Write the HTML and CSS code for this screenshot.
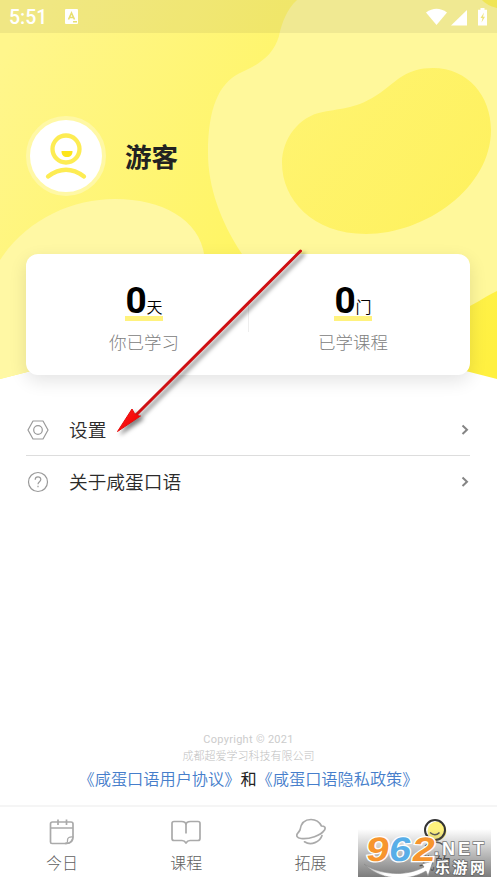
FILE: index.html
```html
<!DOCTYPE html>
<html lang="zh-CN">
<head>
<meta charset="utf-8">
<meta name="viewport" content="width=device-width">
<title>我的</title>
<link rel="stylesheet" href="styles.css">
</head>
<body>
<div class="app">
  <header class="hero">
    <svg class="hero-bg" viewBox="0 0 497 390" aria-hidden="true">
      <defs>
        <linearGradient id="base" x1="0" y1="60" x2="497" y2="360" gradientUnits="userSpaceOnUse">
          <stop offset="0" stop-color="#fff68c"/><stop offset=".5" stop-color="#fff566"/><stop offset="1" stop-color="#fff040"/>
        </linearGradient>
        <linearGradient id="bean" x1="282" y1="68" x2="491" y2="234" gradientUnits="userSpaceOnUse">
          <stop offset="0" stop-color="#fff472"/><stop offset="1" stop-color="#fef15c"/>
        </linearGradient>
      </defs>
      <path fill="url(#base)" d="M0 0H497V379Q372 345 248 345Q124 345 0 379Z"/>
      <path fill="#fff89b" d="M297 0H482Q486 5 497 8V291C483 298 475 304 462 310C410 336 300 330 242 254C220 221 208 186 208 153C208 108 219 83 240 73C257 65 273 57 279 36C282 22 287 9 297 0Z"/>
      <path fill="#fff8a4" d="M0 260C27 219 72 199 115 199C165 199 205 222 205 264C205 320 160 350 130 354Q60 362 0 379Z"/>
      <path fill="url(#bean)" d="M433 68C468 68 491 96 491 130C491 188 425 234 366 234C312 234 282 199 282 163C282 139 299 116 323 112C342 108 357 109 380 93C397 81 406 68 433 68Z"/>
    </svg>
    <div class="status">
      <span class="time">5:51</span>
      <svg class="app-badge" viewBox="0 0 13 15"><rect width="13" height="15" rx="1" fill="#fff"/><path d="M3.500 10.500L6.500 4L9.500 10.500M4.700 8.500H8.300M8 12.700H12" fill="none" stroke="#e8df70" stroke-width="1.600"/></svg>
      <svg class="signals" viewBox="0 0 62 18"><g fill="#fff"><path d="M0 4.500Q10.500 -3 21 4.500L10.500 17Z"/><path d="M41 2V17.500H25Z"/><path d="M54.500 0H58.500V1.800H61V17.500H52V1.800H54.500Z"/></g><path d="M58 4.500L54.500 10H56.500L55.500 14.500L59 8.800H57Z" fill="#eee37c"/></svg>
    </div>
    <div class="profile">
      <div class="avatar">
        <svg viewBox="0 0 72 72"><g fill="none" stroke="#fdec53" stroke-width="4.300" stroke-linecap="round"><circle cx="36" cy="29" r="13.500"/><path d="M18 56.500Q36 43 54 56.500"/></g><path d="M31.500 31H42.500C42.500 35 40.500 37 37 37S31.500 35 31.500 31Z" fill="#fde51a"/></svg>
      </div>
      <h1 class="name">游客</h1>
    </div>
    <section class="stats">
      <div class="stat"><div class="value"><b>0</b><span>天</span></div><div class="caption">你已学习</div></div>
      <div class="divider"></div>
      <div class="stat"><div class="value"><b>0</b><span>门</span></div><div class="caption">已学课程</div></div>
    </section>
  </header>

  <main class="menu">
    <div class="row">
      <svg class="row-icon" viewBox="0 0 22 22"><g fill="none" stroke="#999" stroke-width="1.200"><path d="M6 2H16L21 11L16 20H6L1 11Z" stroke-linejoin="round"/><circle cx="11" cy="11" r="4.300"/></g></svg>
      <span class="row-text">设置</span>
      <svg class="chevron" viewBox="0 0 8 12"><path d="M1.500 1.500L6 5.700L1.500 10" fill="none" stroke="#858585" stroke-width="2"/></svg>
    </div>
    <div class="row">
      <svg class="row-icon" viewBox="0 0 22 22"><g fill="none" stroke="#999" stroke-width="1.200"><circle cx="11" cy="11" r="9.500"/><path d="M8.200 8.700C8.200 5 13.800 5 13.800 8.600C13.800 10.800 11 10.600 11 13.300M11 14.800V16.200"/></g></svg>
      <span class="row-text">关于咸蛋口语</span>
      <svg class="chevron" viewBox="0 0 8 12"><path d="M1.500 1.500L6 5.700L1.500 10" fill="none" stroke="#858585" stroke-width="2"/></svg>
    </div>
  </main>

  <footer class="legal">
    <div class="copyright">Copyright © 2021</div>
    <div class="company">成都超爱学习科技有限公司</div>
    <div class="links"><a>《咸蛋口语用户协议》</a>和<a>《咸蛋口语隐私政策》</a></div>
  </footer>

  <nav class="tabs">
    <div class="tab">
      <svg viewBox="0 0 30 28"><g fill="none" stroke="#aaa" stroke-width="1.700"><path d="M19.500 25.500H5Q3.500 25.500 3.500 24V6Q3.500 4 5.500 4H24Q26 4 26 6V18.500Q26 25.500 19.500 25.500ZM3.500 10H26M11 1.500V7M19.500 1.500V7"/><path d="M26 19C22.500 18.500 20.500 20 20.500 22C20.500 24 21 24.500 18 25.500C22 26 26 23 26 19Z" stroke-width="1.300"/></g></svg>
      <span>今日</span>
    </div>
    <div class="tab">
      <svg viewBox="0 0 30 28"><path d="M15 15.500V7Q15 3.500 10.500 3.500H3Q1 3.500 1 5.500V20.500Q1 22.500 3 22.500H11Q13.500 22.500 15 25Q16.500 22.500 19 22.500H27Q29 22.500 29 20.500V5.500Q29 3.500 27 3.500H19.500Q15 3.500 15 7" fill="none" stroke="#aaa" stroke-width="1.700" stroke-linejoin="round"/></svg>
      <span>课程</span>
    </div>
    <div class="tab">
      <svg viewBox="0 0 30 28"><g fill="none" stroke="#aaa" stroke-width="1.700" stroke-linecap="round"><path d="M4 12C5 5 9 1.500 15 1.500C20 1.500 23.500 4 25.500 8C28.500 8 30 9.500 28.500 12C25 17.500 13 21.500 5 20.500C.8 20 0 17.500 1.500 15.500Q2.800 14 4 12Z"/><path d="M8.500 23.800C15 28 24 24 26 17.500"/></g></svg>
      <span>拓展</span>
    </div>
    <div class="tab active">
      <svg viewBox="0 0 30 28"><circle cx="17" cy="13" r="9.500" fill="#fff27d"/><circle cx="15" cy="12" r="10" fill="none" stroke="#333" stroke-width="2"/><path d="M10 14.500Q15 19 19.500 14.500M5 28Q15 20 25 28" fill="none" stroke="#555" stroke-width="1.500"/></svg>
      <span>我的</span>
    </div>
  </nav>

  <svg class="arrow" viewBox="0 0 200 200" aria-hidden="true">
    <defs>
      <linearGradient id="head" x1="0" y1="0" x2="1" y2="1"><stop offset="0" stop-color="#f22"/><stop offset=".6" stop-color="#f50808"/><stop offset="1" stop-color="#b80000"/></linearGradient>
    </defs>
    <path d="M192.500 11L28 175" stroke="#cf1013" stroke-width="3" stroke-linecap="round"/>
    <path d="M9.500 191.500L24 169L26.500 173.500L31 176H32.500Z" fill="url(#head)" stroke="#e60b0b"/>
  </svg>

  <div class="watermark">
    <svg viewBox="0 0 133 48">
      <defs><linearGradient id="swoosh"><stop offset="0" stop-color="#aaa"/><stop offset=".3" stop-color="#fff"/></linearGradient></defs>
      <path d="M6 35C22 46 48 48 66 38L64 35L75 32L70 47L68 42C48 54 20 50 6 35Z" fill="url(#swoosh)" stroke="#888" stroke-width=".6"/>
      <g class="wm-digits" transform="translate(5.500 0) skewX(-8)"><text x="6" y="32" textLength="23" lengthAdjust="spacingAndGlyphs" fill="#f7952e">9</text><text x="29" y="32" textLength="22" lengthAdjust="spacingAndGlyphs" fill="#58aee8">6</text><text x="52" y="32" textLength="23" lengthAdjust="spacingAndGlyphs" fill="#f7952e">2</text></g>
      <text class="wm-net" x="76" y="26">.NET</text>
      <text class="wm-cn" x="77" y="44">乐游网</text>
    </svg>
  </div>
</div>
</body>
</html>
```
FILE: styles.css
```css
* { box-sizing: border-box; }
body { margin: 0; background: #fff; font-family: Roboto, "Noto Sans CJK SC", sans-serif; }
.app { position: relative; width: 497px; height: 883px; overflow: hidden; display: flex; flex-direction: column; }
svg { display: block; flex: none; }

.hero { position: relative; height: 375px; flex: none; display: flex; flex-direction: column; }
.hero-bg { position: absolute; left: 0; top: 0; width: 497px; height: 390px; z-index: -1; }
.status { height: 33px; background: rgba(90, 85, 60, .09); display: flex; align-items: center; padding: 0 9px; color: #fff; }
.time { font-size: 19.500px; font-weight: 500; width: 56px; line-height: 33px; padding-top: 2px; }
.app-badge { width: 13px; height: 15px; }
.signals { width: 62px; height: 18px; margin-left: auto; }
.profile { display: flex; align-items: center; gap: 19px; margin: 83px 0 0 26px; height: 80px; }
.avatar { width: 80px; height: 80px; border-radius: 50%; border: 4px solid #fff8a5; background: #fff; }
.avatar svg { width: 72px; height: 72px; }
.name { margin: 0; padding-top: 3px; font-size: 26.500px; line-height: 40px; font-weight: 700; color: #222; }
.stats { margin: 58px 27px 0 26px; height: 121px; background: #fff; border-radius: 12px; box-shadow: 0 6px 18px rgba(0, 0, 0, .11); display: flex; padding-left: 14px; padding-right: 13px; }
.stat { flex: 1; display: flex; flex-direction: column; align-items: center; padding-top: 26px; }
.value { width: 38px; height: 41px; border-bottom: 5px solid #fff27d; display: flex; align-items: baseline; justify-content: center; white-space: nowrap; color: #000; line-height: 42px; }
.value b { font-size: 37px; font-weight: 700; line-height: 42px; }
.value span { font-size: 16px; font-weight: 350; }
.caption { margin-top: 9px; font-size: 17.500px; line-height: 26px; font-weight: 300; color: #808080; }
.divider { width: 1px; height: 32px; background: #eee; margin-top: 46px; }

.menu { margin: 29px 27px 0 26px; }
.row { display: flex; align-items: center; height: 51px; padding-left: 1px; }
.row + .row { height: 53px; border-top: 1px solid #ddd; }
.row-icon { width: 22px; height: 22px; }
.row-text { margin-left: 20px; padding-top: 2px; font-size: 18.700px; line-height: 28px; font-weight: 350; color: #2b2b2b; }
.chevron { width: 8px; height: 12px; margin: 0 1px 0 auto; }

.legal { margin-top: auto; text-align: center; }
.copyright { font-size: 11px; line-height: 16px; letter-spacing: .3px; color: #ccc; }
.company { font-size: 11px; line-height: 17px; color: #c0c0c0; font-weight: 300; }
.links { font-size: 16.200px; line-height: 30px; color: #222; white-space: nowrap; }
.links a { color: #467ecb; font-weight: 350; }

.tabs { margin-top: 10px; height: 78px; flex: none; display: grid; grid-template-columns: repeat(4, 1fr); border-top: 2px solid #f5f5f5; }
.tab { display: flex; flex-direction: column; align-items: center; padding-top: 11px; font-size: 16px; line-height: 24px; font-weight: 300; color: #606060; }
.tab svg { width: 30px; height: 28px; margin-bottom: 6px; }
.tab.active { color: #222; font-weight: 400; }

.arrow { position: absolute; left: 108px; top: 240px; width: 200px; height: 200px; filter: drop-shadow(3px 3px 2px rgba(0, 0, 0, .5)); }
.watermark { position: absolute; left: 358px; top: 829px; width: 133px; height: 48px; background: linear-gradient(rgba(120, 120, 120, 0), rgba(110, 110, 110, .9)); }
.watermark svg { width: 133px; height: 48px; }
.wm-digits { font: 700 34px "Liberation Sans", sans-serif; stroke: #fff; stroke-width: 2.500px; paint-order: stroke; }
.wm-net { font: 700 18px "Liberation Sans", sans-serif; letter-spacing: 3px; fill: #fff; stroke: #777; stroke-width: 1.500px; paint-order: stroke; }
.wm-cn { font: 700 15px "Noto Sans CJK SC", sans-serif; letter-spacing: 2.500px; fill: #fff; stroke: #666; stroke-width: 1.500px; paint-order: stroke; }
```
